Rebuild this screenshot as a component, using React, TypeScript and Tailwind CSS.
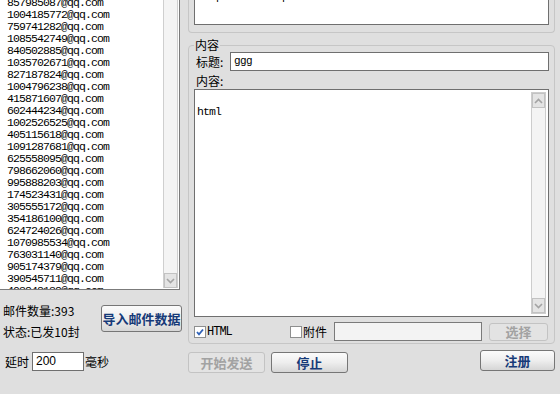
import React, { ReactNode } from 'react';

const emails = [
    '857985087', '1004185772', '759741282', '1085542749', '840502885', '1035702671',
    '827187824', '1004796238', '415871607', '602444234', '1002526525', '405115618',
    '1091287681', '625558095', '798662060', '995888203', '174523431', '305555172',
    '354186100', '624724026', '1070985534', '763031140', '905174379', '390545711',
    '403848138'
];

const cjk = "font-['Noto_Sans_CJK_SC','Noto_Sans',sans-serif]";
const mono = "font-['Liberation_Mono','DejaVu_Sans_Mono',monospace]";

const Chevron = ({ up }: { up?: boolean }) => (
    <svg width="9" height="6" viewBox="0 0 9 6">
        <path d={up ? 'M1 5 L4.5 1.5 L8 5' : 'M1 1 L4.5 4.5 L8 1'} stroke="#a3a3a3" strokeWidth="1.6" fill="none" />
    </svg>
);

const ArrowButton = ({ up }: { up?: boolean }) => (
    <div className="h-[15px] w-full shrink-0 flex items-center justify-center bg-[#e4e4e4] border border-[#c2c2c2]">
        <Chevron up={up} />
    </div>
);

const CheckBox = ({ checked }: { checked?: boolean }) => (
    <span className="w-[12px] h-[12px] shrink-0 border border-[#8e8f8f] bg-white flex items-center justify-center">
        {checked && (
            <svg width="8" height="8" viewBox="0 0 8 8">
                <path d="M1 4 L3 6.3 L7 1.5" stroke="#2f62b8" strokeWidth="1.8" fill="none" />
            </svg>
        )}
    </span>
);

const Button = ({ children, disabled, className }: { children: ReactNode; disabled?: boolean; className: string }) => (
    <div
        className={
            disabled
                ? `${className} ${cjk} flex items-center justify-center rounded-[3px] border border-[#c3c3c3] bg-[#e3e3e3] text-[#a2a2a2] font-bold text-[13px]`
                : `${className} ${cjk} flex items-center justify-center rounded-[3px] border border-[#767676] bg-gradient-to-b from-[#fbfbfb] via-[#eeeeee] to-[#d6d6d6] text-[#163a78] font-bold text-[13px]`
        }
    >
        {children}
    </div>
);

const EmailList = () => (
    <div className="w-[180px] h-[290px] shrink-0 bg-white border-r border-b border-[#7b7b7b] flex overflow-hidden">
        <div className={`flex-1 pl-[7px] -mt-[3px] ${mono} text-[11.5px] tracking-[-0.9px] leading-[12px] text-black`}>
            {emails.map((id) => (
                <div key={id} className="h-[12px] whitespace-nowrap">{id}@qq.com</div>
            ))}
        </div>
        <div className="w-[15px] mr-[1px] mb-[1px] flex flex-col justify-end bg-[#f4f4f4] border-x border-[#cfcfcf]">
            <ArrowButton />
        </div>
    </div>
);

export default function App() {
    return (
        <div className={`w-[560px] h-[394px] bg-[#dfdfdf] flex overflow-hidden text-[12px] text-black ${cjk}`}>
            {/* 左侧: 邮件列表 */}
            <div className="w-[188px] shrink-0 flex flex-col">
                <EmailList />
                <div className="flex pt-[15px]">
                    <div className="w-[101px] pl-[3px] flex flex-col gap-[9px]">
                        <div className="h-[12px] leading-[12px] whitespace-nowrap">邮件数量:393</div>
                        <div className="h-[12px] leading-[12px] whitespace-nowrap">状态:已发10封</div>
                    </div>
                    <Button className="w-[81px] h-[27px]">导入邮件数据</Button>
                </div>
                <div className="flex items-center mt-[14px] pl-[5px] h-[19px]">
                    <span className="w-[27px]">延时</span>
                    <div className="w-[52px] h-[19px] bg-white border border-[#6f6f6f] pl-[3px] font-['Liberation_Sans',sans-serif] text-[12px] leading-[17px]">200</div>
                    <span className="ml-[1px]">毫秒</span>
                </div>
            </div>

            {/* 右侧 */}
            <div className="w-[367px] shrink-0 flex flex-col">
                <div className="h-[33px] border-x border-b border-[#c6c6c6] rounded-b-[4px]">
                    <div className="mx-[5px] h-[25px] bg-white border-x border-b border-[#6f6f6f] overflow-hidden">
                        <div className={`-mt-[9px] pl-[3px] ${mono} text-[11px] tracking-[-0.6px] leading-[12px] whitespace-nowrap`}>
                            http://www.smtp.com/sendmail/sender/mailsender.com/s
                        </div>
                    </div>
                </div>

                <div className="relative mt-[12px] h-[299px] border border-[#c6c6c6] rounded-[4px] flex flex-col">
                    <span className="absolute -top-[8px] left-[5px] px-[1px] bg-[#dfdfdf] leading-[14px]">内容</span>
                    <div className="flex items-center mt-[6px] pl-[7px] h-[19px]">
                        <span className="w-[34px]">标题:</span>
                        <div className={`w-[319px] h-[19px] bg-white border border-[#6f6f6f] pl-[3px] ${mono} text-[11px] tracking-[-0.6px] leading-[17px]`}>ggg</div>
                    </div>
                    <div className="mt-[4px] pl-[7px] h-[12px] leading-[12px]">内容:</div>
                    <div className="mt-[2px] ml-[5px] w-[355px] h-[228px] bg-white border border-[#6f6f6f] flex">
                        <div className={`flex-1 pl-[2px] pt-[1px] ${mono} text-[11.5px] tracking-[-0.9px] leading-[14px]`}>
                            <div className="h-[14px]" />
                            <div>html</div>
                        </div>
                        <div className="w-[15px] mt-[2px] mb-[2px] mr-[2px] flex flex-col justify-between bg-[#f4f4f4] border border-[#cdcdcd]">
                            <ArrowButton up />
                            <ArrowButton />
                        </div>
                    </div>
                    <div className="flex items-center mt-[5px] h-[19px]">
                        <div className="flex items-center ml-[5px] w-[96px]">
                            <CheckBox checked />
                            <span className={`ml-[1px] ${mono} text-[12px] tracking-[-1px]`}>HTML</span>
                        </div>
                        <div className="flex items-center w-[44px]">
                            <CheckBox />
                            <span className="ml-[1px]">附件</span>
                        </div>
                        <div className="w-[148px] h-[19px] bg-[#f3f3f3] border border-[#7a7a7a]" />
                        <Button disabled className="ml-[7px] w-[59px] h-[18px]">选择</Button>
                    </div>
                </div>

                <div className="flex items-start mt-[6px]">
                    <Button disabled className="mt-[2px] w-[77px] h-[21px]">开始发送</Button>
                    <Button className="mt-[2px] ml-[6px] w-[77px] h-[21px]">停止</Button>
                    <Button className="ml-auto w-[75px] h-[21px]">注册</Button>
                </div>
            </div>
        </div>
    );
}
